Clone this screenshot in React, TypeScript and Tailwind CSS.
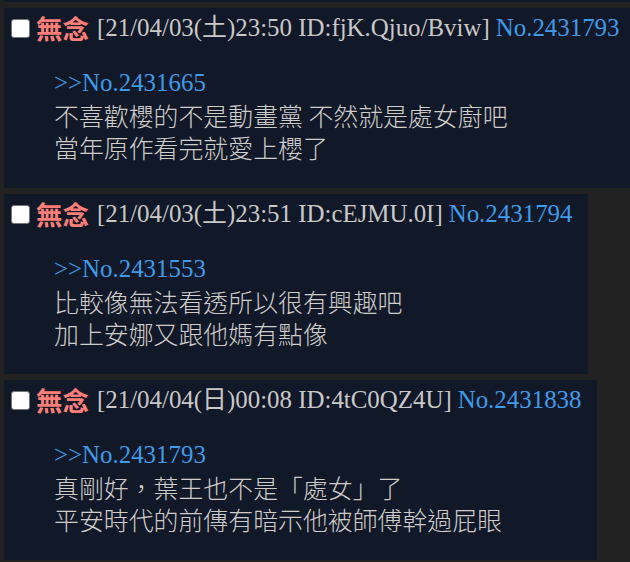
import React from "react";

type Post = {
  date: string;
  id: string;
  no: string;
  quote: string;
  lines: string[];
  width: string;
};

const posts: Post[] = [
  {
    date: "21/04/03(土)23:50",
    id: "fjK.Qjuo/Bviw",
    no: "2431793",
    quote: "2431665",
    lines: ["不喜歡櫻的不是動畫黨 不然就是處女廚吧", "當年原作看完就愛上櫻了"],
    width: "w-[640px]",
  },
  {
    date: "21/04/03(土)23:51",
    id: "cEJMU.0I",
    no: "2431794",
    quote: "2431553",
    lines: ["比較像無法看透所以很有興趣吧", "加上安娜又跟他媽有點像"],
    width: "w-[584px]",
  },
  {
    date: "21/04/04(日)00:08",
    id: "4tC0QZ4U",
    no: "2431838",
    quote: "2431793",
    lines: ["真剛好，葉王也不是「處女」了", "平安時代的前傳有暗示他被師傅幹過屁眼"],
    width: "w-[593px]",
  },
];

const serif = "font-['Liberation_Serif','Noto_Sans_CJK_TC',serif]";
const cjk = "font-['Noto_Sans_CJK_TC','Noto_Sans_CJK_JP',sans-serif]";

function Reply({ p }: { p: Post }) {
  return (
    <div className={`${p.width} shrink-0 bg-[#111827] pl-[7px] pt-[4px] pb-[25px]`}>
      <div className="flex h-[32px] items-center whitespace-nowrap">
        <span className="h-[19px] w-[19px] shrink-0 rounded-[3px] border border-[#767676] bg-white" />
        <span className={`${cjk} ml-[6px] text-[26.5px] font-bold leading-none text-[#fb7f78]`}>無念</span>
        <span className={`${serif} ml-[8px] text-[24.9px] leading-none text-[#c9c9c9]`}>
          [{p.date} ID:{p.id}]
        </span>
        <span className={`${serif} ml-[6px] text-[24.9px] leading-none text-[#3d9be9]`}>No.{p.no}</span>
      </div>
      <div className="mt-[23px] pl-[43px] text-[24.9px] leading-[32px]">
        <div className={`${serif} text-[#3d9be9]`}>&gt;&gt;No.{p.quote}</div>
        {p.lines.map((l) => (
          <div key={l} className={`${cjk} font-light text-[#cfcdcb]`}>
            {l}
          </div>
        ))}
      </div>
    </div>
  );
}

export default function App() {
  return (
    <div className="flex h-[562px] w-[630px] flex-col gap-[6px] overflow-hidden bg-[#222222] pl-[4px]">
      <div className="h-[2px] w-[640px] shrink-0 bg-[#111827]" />
      {posts.map((p) => (
        <Reply key={p.no} p={p} />
      ))}
    </div>
  );
}
